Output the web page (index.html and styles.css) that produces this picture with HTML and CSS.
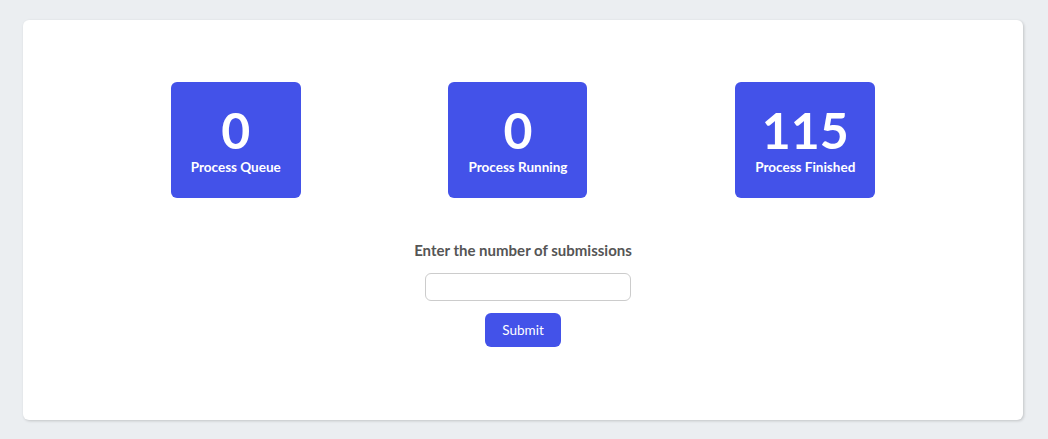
FILE: index.html
```html
<!DOCTYPE html>
<html>
<head>
<meta charset="utf-8">
<link rel="stylesheet" href="styles.css">
</head>
<body>
<div class="page">
  <div class="card">
    <div class="stats">
      <div class="stat">
        <div class="stat-num">0</div>
        <div class="stat-label">Process Queue</div>
      </div>
      <div class="stat">
        <div class="stat-num">0</div>
        <div class="stat-label">Process Running</div>
      </div>
      <div class="stat">
        <div class="stat-num">115</div>
        <div class="stat-label">Process Finished</div>
      </div>
    </div>
    <form class="form">
      <label class="form-label" for="n">Enter the number of submissions</label>
      <input class="form-input" id="n" type="text">
      <button class="form-btn" type="button">Submit</button>
    </form>
  </div>
</div>
</body>
</html>
```
FILE: styles.css
```css
html, body {
  margin: 0;
  padding: 0;
}
body {
  background: #ebeef1;
  font-family: Lato, "Open Sans", sans-serif;
}
.page {
  padding: 20px 25px 19px 23px;
}
.card {
  width: 1000px;
  height: 400px;
  box-sizing: border-box;
  background: #fff;
  border-radius: 6px;
  box-shadow: 1px 1px 3px rgba(0, 0, 0, 0.18);
  padding-top: 62px;
}
.stats {
  display: flex;
  justify-content: space-evenly;
}
.stat {
  background: #4352e9;
  color: #fff;
  border-radius: 6px;
  padding: 19px 20px 22px;
  display: flex;
  flex-direction: column;
  align-items: center;
}
.stat-num {
  font-size: 50px;
  font-weight: 700;
  line-height: 58px;
}
.stat-label {
  font-size: 13.5px;
  font-weight: 700;
  line-height: 17px;
}
.form {
  display: flex;
  flex-direction: column;
  align-items: center;
  margin-top: 41px;
}
.form-label {
  font-size: 15px;
  font-weight: 700;
  color: #555;
  line-height: 22px;
}
.form-input {
  margin-top: 12px;
  margin-left: 10px;
  width: 206px;
  height: 28px;
  box-sizing: border-box;
  border: 1px solid #ccc;
  border-radius: 6px;
  font-family: inherit;
}
.form-btn {
  margin-top: 12px;
  width: 76px;
  height: 34px;
  border: none;
  border-radius: 6px;
  background: #4352e9;
  color: #fff;
  font-family: inherit;
  font-size: 13.5px;
}
```
